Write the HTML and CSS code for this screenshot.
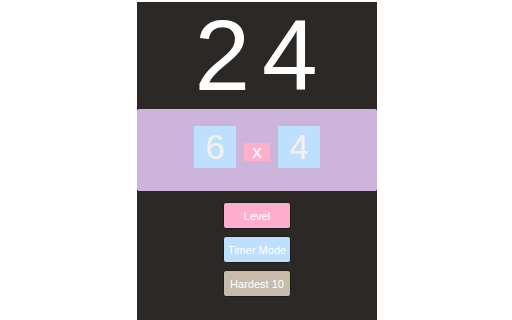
FILE: index.html
```html
<!DOCTYPE html>
<html lang="en">
<head>
    <meta charset="UTF-8">
    <meta name="viewport" content="width=device-width, initial-scale=1.0">
    <title>24</title>
    <link rel="stylesheet" href="styles.css">
</head>
<body>
    <div class="game">
        <div class="target">24</div>
        <div class="board">
            <div class="tile">6</div>
            <div class="op">x</div>
            <div class="tile">4</div>
        </div>
        <div class="menu">
            <button class="btn btn-level">Level</button>
            <button class="btn btn-timer">Timer Mode</button>
            <button class="btn btn-hard">Hardest 10</button>
        </div>
    </div>
</body>
</html>
```

FILE: styles.css
```css
* {
    margin: 0;
    padding: 0;
    box-sizing: border-box;
    font-family: 'Liberation Sans', Arial, sans-serif;
}

body {
    background: #fff;
    padding-left: 2px;
}

.game {
    width: 240px;
    min-height: 318px;
    margin: 2px auto 0;
    background: #2b2826;
}

.target {
    height: 107px;
    line-height: 107px;
    font-size: 100px;
    color: #fff;
    text-align: center;
    letter-spacing: 12px;
    padding-left: 10px;
}

.board {
    height: 82px;
    background: #cdb4db;
    border-radius: 2px;
    display: flex;
    justify-content: center;
    align-items: center;
    gap: 8px;
    padding-bottom: 6px;
}

.tile {
    width: 42px;
    height: 42px;
    line-height: 42px;
    background: #bde0fe;
    color: #f5f1e8;
    font-size: 35px;
    text-align: center;
}

.op {
    width: 26px;
    height: 18px;
    line-height: 18px;
    margin-top: 10px;
    background: #ffafcc;
    color: #fff;
    font-size: 19px;
    text-align: center;
}

.menu {
    display: flex;
    flex-direction: column;
    align-items: center;
    gap: 7px;
    padding-top: 11px;
}

.btn {
    width: 68px;
    height: 27px;
    border: 1px solid #1e1c1b;
    border-radius: 3px;
    color: #fff;
    font-size: 11px;
    cursor: pointer;
}

.btn-level {
    background: #ffafcc;
}

.btn-timer {
    background: #bde0fe;
}

.btn-hard {
    background: #c8bba9;
}
```
